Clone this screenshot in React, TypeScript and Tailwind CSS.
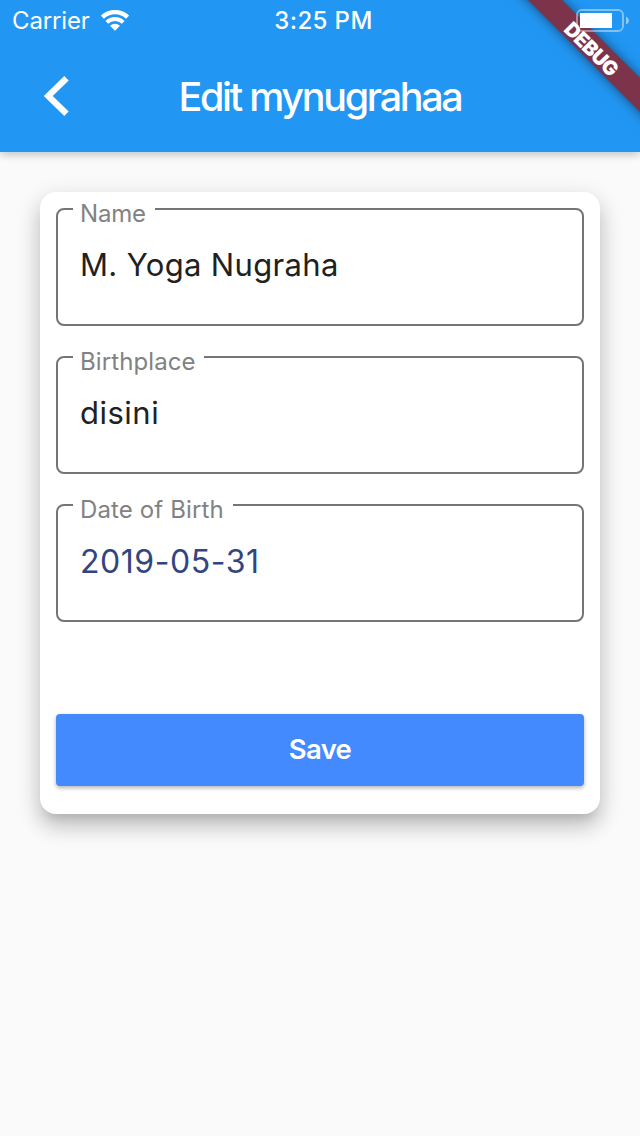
type FieldProps = {
  label: string;
  value: string;
  notch: string;
  labelSpacing: string;
  valueClass: string;
};

function Field({ label, value, notch, labelSpacing, valueClass }: FieldProps) {
  return (
    <fieldset className="h-[118px] rounded-lg border-2 border-[#757575] pl-[15px]">
      <legend className={`h-[2px] pl-[7px] ${notch}`}>
        <span className={`block -mt-[8px] whitespace-nowrap text-[24px] leading-[28px] text-[#828282] ${labelSpacing}`}>
          {label}
        </span>
      </legend>
      <div className={`pl-[7px] leading-[40px] whitespace-nowrap ${valueClass}`}>{value}</div>
    </fieldset>
  );
}

function StatusBar() {
  return (
    <div className="grid h-10 grid-cols-[200px_240px_200px] items-center pt-[2px] text-[24px] leading-[38px] text-white">
      <div className="flex items-center gap-[11px] pl-3">
        <span className="w-[78px] tracking-[-0.15px]">Carrier</span>
        <svg className="-mt-0.5" width="28" height="21" viewBox="0 0 28 21" fill="none">
          <path d="M1.4 7.2A18 18 0 0 1 26.6 7.2" stroke="#fff" strokeWidth="4.4" />
          <path d="M5.8 12.4A11.7 11.7 0 0 1 22.2 12.4" stroke="#fff" strokeWidth="4" />
          <path d="M9 15.8Q14 11.8 19 15.8L14 20.8Z" fill="#fff" />
        </svg>
      </div>
      <span className="pl-[7px] text-center font-medium tracking-[0.4px]">3:25 PM</span>
    </div>
  );
}

export default function App() {
  return (
    <div className="relative h-[1136px] w-[640px] overflow-hidden bg-[#fafafa] font-['Inter',sans-serif]">
      <header className="h-[152px] bg-[#2196f3] shadow-[0_3px_8px_rgba(0,0,0,0.16),0_1px_10px_rgba(0,0,0,0.08)]">
        <StatusBar />
        <div className="grid h-28 grid-cols-[112px_416px_112px] items-center">
          <svg className="ml-11" width="26" height="42" viewBox="0 0 26 42" fill="none">
            <path d="M22.5 3.2L4.2 21L22.5 38.8" stroke="#fff" strokeWidth="6.3" />
          </svg>
          <h1 className="mt-px text-center text-[39.5px] leading-[48px] font-medium tracking-[-2.3px] text-white">Edit mynugrahaa</h1>
        </div>
      </header>

      <main className="px-10 pt-10">
        <section className="flex h-[622px] flex-col rounded-2xl bg-white px-4 pt-4 shadow-[0_10px_10px_-6px_rgba(0,0,0,0.1),0_13px_20px_1px_rgba(0,0,0,0.16),0_6px_26px_2px_rgba(0,0,0,0.09)]">
          <div className="flex flex-col gap-[30px]">
            <Field label="Name" value="M. Yoga Nugraha" notch="w-[82px]" labelSpacing="tracking-[-0.2px]" valueClass="mt-[35px] text-[31px] text-[#212121] tracking-[0.35px]" />
            <Field label="Birthplace" value="disini" notch="w-[131px]" labelSpacing="tracking-[0.1px]" valueClass="mt-[35px] text-[31px] text-[#212121] tracking-[0.5px]" />
            <Field label="Date of Birth" value="2019-05-31" notch="w-[160px]" labelSpacing="tracking-[0.12px]" valueClass="mt-[36px] text-[32px] text-[#32457f] tracking-[0.55px]" />
          </div>
          <button className="mt-[92px] h-[72px] w-full rounded bg-[#448aff] text-[27.5px] font-semibold tracking-[-0.7px] text-white shadow-[0_2px_4px_rgba(0,0,0,0.3)]">
            Save
          </button>
        </section>
      </main>

      <div className="absolute top-[35.5px] left-[492.5px] flex h-6 w-[200px] rotate-45 items-center justify-center bg-[#7d3349] text-[20px] leading-none font-black text-white shadow-[0_0_12px_rgba(0,0,0,0.5)]">
        <span className="-ml-[1px] pt-[3px] tracking-[-0.6px]">DEBUG</span>
      </div>
      <svg className="absolute top-[8px] left-[575px]" width="56" height="26" viewBox="0 0 56 26" fill="none">
        <rect x="2" y="2" width="46" height="21" rx="5" stroke="#fff" strokeOpacity="0.42" strokeWidth="2" />
        <rect x="5" y="5" width="32" height="15" fill="#fff" />
        <path d="M51 8.5Q54 10 54 12.5T51 16.5Z" fill="#fff" fillOpacity="0.5" />
      </svg>
    </div>
  );
}
